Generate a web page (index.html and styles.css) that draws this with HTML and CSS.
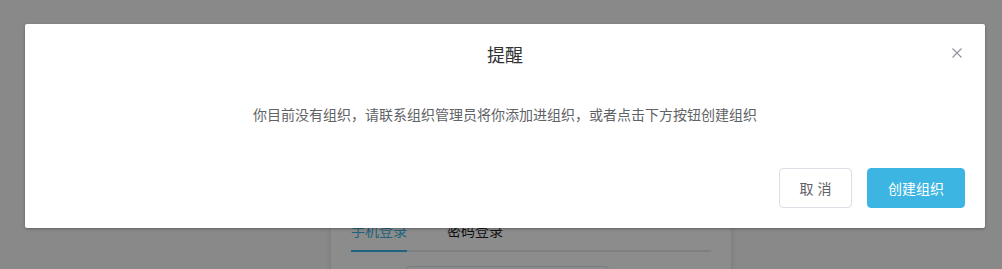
FILE: index.html
```html
<!DOCTYPE html>
<html lang="zh-CN">
<head>
<meta charset="utf-8">
<title>提醒</title>
<link rel="stylesheet" href="styles.css">
</head>
<body>
<div class="page">
  <div class="login-card">
    <div class="tabs">
      <div class="tab tab-active">手机登录</div>
      <div class="tab">密码登录</div>
    </div>
    <div class="form-row">
      <div class="input-box"></div>
    </div>
  </div>
</div>
<div class="overlay"></div>
<div class="dialog">
  <div class="dialog-header">
    <span class="dialog-title">提醒</span>
    <button class="dialog-close" aria-label="关闭">
      <svg width="10" height="10" viewBox="0 0 10 10"><path d="M0.5 0.5 L9.5 9.5 M9.5 0.5 L0.5 9.5" stroke="#909399" stroke-width="1.1" fill="none"/></svg>
    </button>
  </div>
  <div class="dialog-body">你目前没有组织，请联系组织管理员将你添加进组织，或者点击下方按钮创建组织</div>
  <div class="dialog-footer">
    <button class="btn btn-default"><span class="btn-text">取 消</span></button>
    <button class="btn btn-primary"><span class="btn-text">创建组织</span></button>
  </div>
</div>
</body>
</html>
```

FILE: styles.css
```css
html, body {
  margin: 0;
  padding: 0;
}
body {
  width: 1002px;
  height: 269px;
  overflow: hidden;
  background: #f9f9f9;
  font-family: "Noto Sans CJK SC", "Noto Sans", sans-serif;
  position: relative;
}
.page {
  display: flex;
  justify-content: flex-start;
  padding-left: 331px;
  padding-top: 160px;
  height: 109px;
  overflow: hidden;
}
.login-card {
  width: 360px;
  height: 200px;
  background: #ffffff;
  padding: 60px 20px 0;
  box-shadow: 0 0 6px rgba(0, 0, 0, 0.12);
}
.tabs {
  display: flex;
  gap: 40px;
  border-bottom: 2px solid #e4e7ed;
}
.tab {
  font-size: 14px;
  line-height: 20px;
  height: 20px;
  padding-bottom: 10px;
  color: #1f1f1f;
  margin-bottom: -2px;
  border-bottom: 2px solid transparent;
}
.tab-active {
  color: #3bb4e5;
  border-bottom-color: #3bb4e5;
}
.form-row {
  display: flex;
  padding-left: 55px;
  padding-top: 14px;
}
.input-box {
  width: 201px;
  height: 38px;
  border: 1px solid #dcdfe6;
  border-radius: 4px;
}
.overlay {
  position: absolute;
  inset: 0;
  background: rgba(0, 0, 0, 0.45);
}
.dialog {
  position: absolute;
  left: 25px;
  top: 24px;
  width: 960px;
  background: #ffffff;
  border-radius: 2px;
  box-shadow: 0 1px 3px rgba(0, 0, 0, 0.3);
}
.dialog-header {
  position: relative;
  padding: 18px 20px 10px;
  text-align: center;
}
.dialog-title {
  font-size: 18px;
  line-height: 24px;
  color: #303133;
}
.dialog-close {
  position: absolute;
  top: 24px;
  right: 23px;
  width: 10px;
  height: 10px;
  padding: 0;
  border: 0;
  background: none;
  display: flex;
}
.dialog-body {
  padding: 27px 20px 33px;
  font-size: 14px;
  line-height: 21px;
  color: #606266;
  text-align: center;
}
.dialog-footer {
  display: flex;
  justify-content: flex-end;
  gap: 15px;
  padding: 10px 20px 20px;
}
.btn {
  font-family: "Noto Sans CJK SC", "Noto Sans", sans-serif;
  font-size: 14px;
  line-height: 14px;
  height: 40px;
  padding: 0 10px;
  border-radius: 4px;
  border: 1px solid #dcdfe6;
  background: #ffffff;
  color: #606266;
  box-sizing: border-box;
  display: flex;
  align-items: center;
  justify-content: center;
}
.btn-text {
  white-space: pre;
  word-spacing: 1px;
}
.btn-default {
  width: 73px;
}
.btn-primary {
  width: 98px;
  background: #3db5e2;
  border-color: #3db5e2;
  color: #ffffff;
}
```
